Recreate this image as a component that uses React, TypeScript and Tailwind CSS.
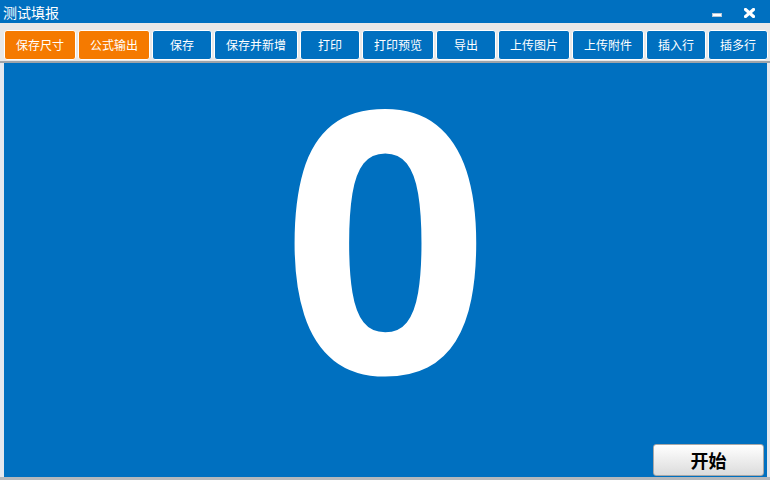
const buttons: { label: string; w: string; orange?: boolean }[] = [
  { label: "保存尺寸", w: "w-[72px]", orange: true },
  { label: "公式输出", w: "w-[72px]", orange: true },
  { label: "保存", w: "w-[60px]" },
  { label: "保存并新增", w: "w-[84px]" },
  { label: "打印", w: "w-[60px]" },
  { label: "打印预览", w: "w-[72px]" },
  { label: "导出", w: "w-[60px]" },
  { label: "上传图片", w: "w-[72px]" },
  { label: "上传附件", w: "w-[72px]" },
  { label: "插入行", w: "w-[60px]" },
  { label: "插多行", w: "w-[60px]" },
];

export default function App() {
  return (
    <div
      className="flex h-[480px] w-[770px] flex-col overflow-hidden bg-[#e4e8ee]"
      style={{ fontFamily: '"Noto Sans CJK SC", "Noto Sans", sans-serif' }}
    >
      <div className="flex h-[23px] items-center justify-between bg-[#0070c0] pl-[3px] pr-[15px] text-white">
        <span className="text-[14px] leading-none">测试填报</span>
        <div className="flex items-center gap-[22px]">
          <span className="mt-[6px] block h-[4px] w-[10px] border border-[#b8c8d8] bg-white" />
          <svg width="11" height="10" viewBox="0 0 11 10" className="mt-[2px]">
            <path d="M1.5 1.5 L9.5 8.5 M9.5 1.5 L1.5 8.5" stroke="white" strokeWidth="3.2" strokeLinecap="square" />
          </svg>
        </div>
      </div>
      <div className="flex gap-[2px] bg-[#e8e8e8] pb-[1px] pl-[4px] pt-[7px]">
        {buttons.map((b) => (
          <button
            key={b.label}
            className={`${b.w} h-[30px] rounded-[3px] border border-white text-[12px] leading-none text-white ${
              b.orange ? "bg-[#f57a00]" : "bg-[#0070c0]"
            }`}
          >
            {b.label}
          </button>
        ))}
      </div>
      <div className="h-[2px] bg-[#9ea4aa]" />
      <div className="ml-[4px] mr-[3px] flex h-[414px] flex-col bg-[#0070c0]">
        <div className="flex flex-1 items-start justify-center pt-[4px]">
          <span
            className="text-[364px] font-bold leading-[330px] text-white"
            style={{ fontFamily: '"Open Sans", sans-serif' }}
          >
            0
          </span>
        </div>
        <div className="flex justify-end pb-[1px] pr-[3px]">
          <button className="h-[32px] w-[111px] rounded-[3px] border border-[#a8a8a8] bg-gradient-to-b from-white to-[#dcdcdc] text-[18px] font-bold leading-none text-black">
            开始
          </button>
        </div>
      </div>
      <div className="flex-1 bg-[#b4b8bc]" />
    </div>
  );
}
